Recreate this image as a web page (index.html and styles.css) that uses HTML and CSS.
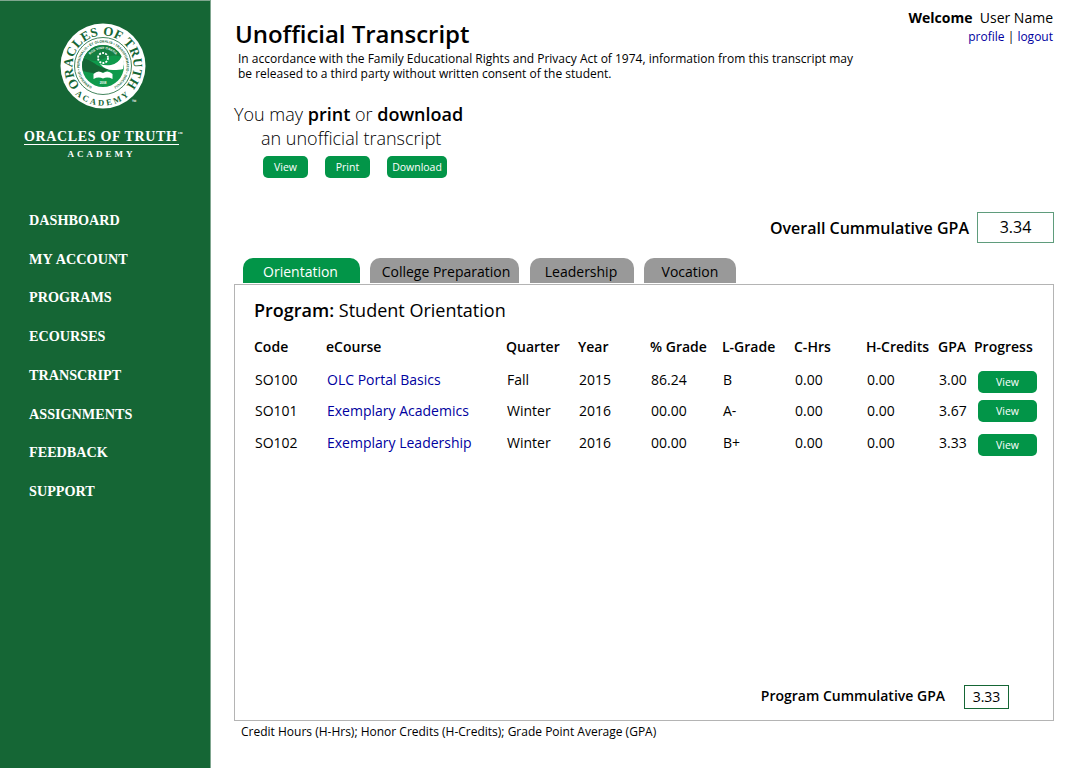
FILE: index.html
```html
<!DOCTYPE html>
<html lang="en">
<head>
<meta charset="utf-8">
<title>Unofficial Transcript</title>
<link rel="stylesheet" href="styles.css">
</head>
<body>
<div class="page">
  <aside class="sidebar">
    <div class="logo">
      <svg class="seal" width="92" height="92" viewBox="0 0 92 92" aria-hidden="true">
        <defs>
          <path id="arcTop" d="M46 74.500 A30.500 30.500 0 1 1 46 13.500 A30.500 30.500 0 1 1 46 74.500"/>
          <path id="arcBottom" d="M6.500 44 A39.500 39.500 0 0 0 85.500 44"/>
          <path id="arcInner" d="M46 67.500 A23.500 23.500 0 1 1 46 20.500 A23.500 23.500 0 1 1 46 67.500"/>
          <path id="arcCore" d="M29 44 A17 17 0 0 1 63 44"/>
        </defs>
        <circle cx="46" cy="44" r="42.500" fill="#fff"/>
        <circle cx="46" cy="44" r="28.500" fill="#fff" stroke="#156635" stroke-width="0.8"/>
        <circle cx="46" cy="44" r="21" fill="#0f9a4c"/>
        <path d="M27 35 A21 21 0 0 1 65 35 Q56 31 46 37 Q36 42 27 35Z" fill="#147f41"/>
        <path d="M25 44 Q25 39 27 36 Q33 38 37 41 Q43 46 52 47 Q46 52 36 51 Q29 50 26 49Z" fill="#156635"/>
        <path d="M67 42 Q67 37 65 34 Q61 42 54 43 Q48 44 43 42 Q48 48 56 48 Q63 48 66 47Z" fill="#fff"/>
        <circle cx="46" cy="36" r="5" fill="none" stroke="#fff" stroke-width="1.800" stroke-dasharray="2 1.150"/>
        <path d="M36.500 57 V52 Q41 47.500 46 51 Q51 47.500 55.500 52 V57 Q50.500 54.500 46 56.500 Q41.500 54.500 36.500 57Z" fill="#fff"/>
        <text class="seal-outer"><textPath href="#arcTop" startOffset="50%" text-anchor="middle">ORACLES OF TRUTH</textPath></text>
        <text class="seal-academy"><textPath href="#arcBottom" startOffset="50%" text-anchor="middle">ACADEMY</textPath></text>
        <text class="seal-inner"><textPath href="#arcInner" startOffset="50%" text-anchor="middle">GENERATIO • PERSONALIS • ET GLOBALIS • TRANSFORMATIO • DISCIPULI</textPath></text>
        <text class="seal-core"><textPath href="#arcCore" startOffset="50%" text-anchor="middle">BOS VINIT GRATIA</textPath></text>
        <text class="seal-year" x="46" y="62" text-anchor="middle">2008</text>
      </svg>
      <span class="seal-tm">™</span>
      <div class="wordmark">ORACLES OF TRUTH<sup>™</sup></div>
      <div class="wordmark-sub">ACADEMY</div>
    </div>
    <nav class="nav">
      <a href="#">Dashboard</a>
      <a href="#">My Account</a>
      <a href="#">Programs</a>
      <a href="#">eCourses</a>
      <a href="#">Transcript</a>
      <a href="#">Assignments</a>
      <a href="#">Feedback</a>
      <a href="#">Support</a>
    </nav>
  </aside>

  <main class="main">
    <header class="top">
      <div class="intro">
        <h1>Unofficial Transcript</h1>
        <p>In accordance with the Family Educational Rights and Privacy Act of 1974, information from this transcript may<br>be released to a third party without written consent of the student.</p>
      </div>
      <div class="user">
        <div class="welcome"><b>Welcome</b>&nbsp; User Name</div>
        <div class="links"><a href="#">profile</a> | <a href="#">logout</a></div>
      </div>
    </header>

    <section class="actions">
      <div class="lead">You may <b>print</b> or <b>download</b></div>
      <div class="lead lead-sub">an unofficial transcript</div>
      <div class="buttons">
        <a class="btn btn-view" href="#">View</a>
        <a class="btn btn-print" href="#">Print</a>
        <a class="btn btn-dl" href="#">Download</a>
      </div>
    </section>

    <div class="overall">
      <b>Overall Cummulative GPA</b>
      <span class="gpa-box">3.34</span>
    </div>

    <div class="tabs">
      <a class="tab tab-active t1" href="#">Orientation</a>
      <a class="tab t2" href="#">College Preparation</a>
      <a class="tab t3" href="#">Leadership</a>
      <a class="tab t4" href="#">Vocation</a>
    </div>

    <section class="panel">
      <h2><b>Program:</b> Student Orientation</h2>
      <div class="grid head">
        <span>Code</span><span>eCourse</span><span>Quarter</span><span>Year</span><span>% Grade</span><span>L-Grade</span><span>C-Hrs</span><span>H-Credits</span><span>GPA</span><span>Progress</span>
      </div>
      <div class="grid row r1">
        <span>SO100</span><a href="#">OLC Portal Basics</a><span>Fall</span><span>2015</span><span>86.24</span><span>B</span><span>0.00</span><span>0.00</span><span>3.00</span><a class="btn btn-row" href="#">View</a>
      </div>
      <div class="grid row r2">
        <span>SO101</span><a href="#">Exemplary Academics</a><span>Winter</span><span>2016</span><span>00.00</span><span>A-</span><span>0.00</span><span>0.00</span><span>3.67</span><a class="btn btn-row" href="#">View</a>
      </div>
      <div class="grid row r3">
        <span>SO102</span><a href="#">Exemplary Leadership</a><span>Winter</span><span>2016</span><span>00.00</span><span>B+</span><span>0.00</span><span>0.00</span><span>3.33</span><a class="btn btn-row" href="#">View</a>
      </div>
      <div class="program-gpa">
        <b>Program Cummulative GPA</b>
        <span class="gpa-small">3.33</span>
      </div>
    </section>
    <p class="legend">Credit Hours (H-Hrs); Honor Credits (H-Credits); Grade Point Average (GPA)</p>
  </main>
</div>
</body>
</html>
```
FILE: styles.css
```css
* { box-sizing: border-box; }
html, body { margin: 0; padding: 0; background: #fff; }
body { font-family: "Open Sans", "Liberation Sans", sans-serif; color: #000; overflow: hidden; }
a { text-decoration: none; }

.page { display: flex; width: 1090px; height: 768px; }

.sidebar { width: 211px; flex: none; background: #156635; border-right: 1px solid #7fa68f; border-top: 1px solid #7fa68f; color: #fff; position: relative; }
.logo { display: flex; flex-direction: column; align-items: center; position: relative; padding-top: 21px; height: 205px; }
.seal { display: block; margin-left: -5px; }
.seal-outer { font-family: "Liberation Serif", serif; font-size: 13px; font-weight: 700; letter-spacing: 0.4px; fill: #156635; }
.seal-academy { font-family: "Liberation Serif", serif; font-size: 8.5px; font-weight: 700; letter-spacing: 2.5px; fill: #156635; }
.seal-inner { font-family: "Liberation Sans", sans-serif; font-size: 3.4px; font-weight: 700; fill: #156635; }
.seal-core { font-family: "Liberation Sans", sans-serif; font-size: 3.2px; font-weight: 700; fill: #fff; }
.seal-year { font-family: "Liberation Sans", sans-serif; font-size: 3px; font-weight: 700; fill: #fff; }
.seal-tm { position: absolute; left: 132px; top: 97px; font-size: 6px; color: #fff; }
.wordmark { margin-top: 15px; width: 155px; border-bottom: 1px solid #fff; font-family: "Liberation Serif", serif; font-weight: 700; font-size: 14px; letter-spacing: 0.65px; white-space: nowrap; line-height: 15px; margin-right: 7px; }
.wordmark sup { font-size: 5px; vertical-align: 6px; line-height: 0; }
.wordmark-sub { margin-top: 3px; font-family: "Liberation Serif", serif; font-weight: 700; font-size: 9px; letter-spacing: 3px; line-height: 12px; margin-right: 7px; }

.nav { display: flex; flex-direction: column; padding: 0 0 0 29px; margin-top: 4.1px; }
.nav a { font-family: "Liberation Serif", serif; font-weight: 700; color: #fff; font-size: 14.2px; line-height: 20px; margin-bottom: 18.7px; text-transform: uppercase; word-spacing: 1px; white-space: nowrap; }

.main { flex: 1; padding-left: 23px; padding-right: 36px; min-width: 0; }

.top { display: flex; justify-content: space-between; }
.intro h1 { margin: 18px 0 0 1px; font-size: 24px; font-weight: 600; letter-spacing: -0.05px; line-height: 32px; }
.intro p { margin: 1px 0 0 4px; font-size: 12px; line-height: 15px; white-space: nowrap; }
.user { text-align: right; padding-top: 8px; padding-right: 1px; }
.welcome { font-size: 14px; line-height: 20px; }
.links { font-size: 12px; line-height: 18px; }
.links a { color: #0000a0; }

.actions { margin-top: 21px; }
.lead { font-size: 18px; line-height: 25px; font-weight: 300; }
.lead b { font-weight: 600; }
.lead-sub { margin-top: -1px; margin-left: 27px; font-weight: 300; }
.buttons { display: flex; margin-top: 5px; margin-left: 29px; }
.btn { display: flex; align-items: center; justify-content: center; background: #029548; color: #fff; border-radius: 5px; font-size: 10.5px; height: 22px; }
.btn-view { width: 45px; }
.btn-print { width: 45px; margin-left: 17px; }
.btn-dl { width: 60px; margin-left: 17px; }

.overall { display: flex; justify-content: flex-end; align-items: center; margin-top: 34px; font-size: 16px; line-height: 22px; }
.overall b { font-weight: 600; }
.gpa-box { display: block; width: 77px; height: 31px; margin-left: 8px; border: 1px solid #5f9c7c; text-align: center; line-height: 29px; font-size: 16px; }

.tabs { display: flex; margin-top: 15px; margin-left: 9px; height: 26px; }
.tab { display: flex; align-items: center; justify-content: center; height: 25px; padding-top: 2px; background: #999; color: #000; border-radius: 10px 10px 0 0; font-size: 14px; }
.tab-active { background: #029548; color: #fff; }
.t1 { width: 117px; padding-right: 2px; }
.t2 { width: 149px; margin-left: 10px; padding-left: 3px; }
.t3 { width: 104px; margin-left: 11px; padding-right: 2px; }
.t4 { width: 92px; margin-left: 10px; }

.panel { position: relative; height: 437px; border: 1px solid #b4b4b4; padding: 13px 19px 0; }
.panel h2 { margin: 0; font-size: 18px; font-weight: 400; line-height: 24px; }
.panel h2 b { font-weight: 600; }

.grid { display: grid; grid-template-columns: 72px 180px 72px 72px 72px 72px 72px 72px 36px auto; font-size: 14px; white-space: nowrap; align-items: center; }
.head { margin-top: 15px; line-height: 20px; font-weight: 600; }
.row { padding-left: 1px; grid-template-rows: 20px; }
.row a { color: #0000a0; }
.r1 { margin-top: 12px; height: 20px; }
.r2 { margin-top: 11px; height: 20px; }
.r3 { margin-top: 12px; height: 20px; }
.row .btn-row { color: #fff; width: 59px; height: 22px; margin-left: 3px; font-size: 10.5px; }
.r1 .btn-row { margin-top: 6px; }
.r2 .btn-row { margin-top: 2px; }
.r3 .btn-row { margin-top: 6px; }

.program-gpa { position: absolute; right: 44px; bottom: 11px; display: flex; align-items: center; font-size: 14px; }
.program-gpa b { font-weight: 600; padding-bottom: 4px; }
.gpa-small { display: block; width: 45px; height: 24px; margin-left: 19px; border: 1px solid #156635; text-align: center; line-height: 22px; font-size: 14px; }

.legend { margin: 3px 0 0 7px; font-size: 12px; line-height: 16px; }
```
